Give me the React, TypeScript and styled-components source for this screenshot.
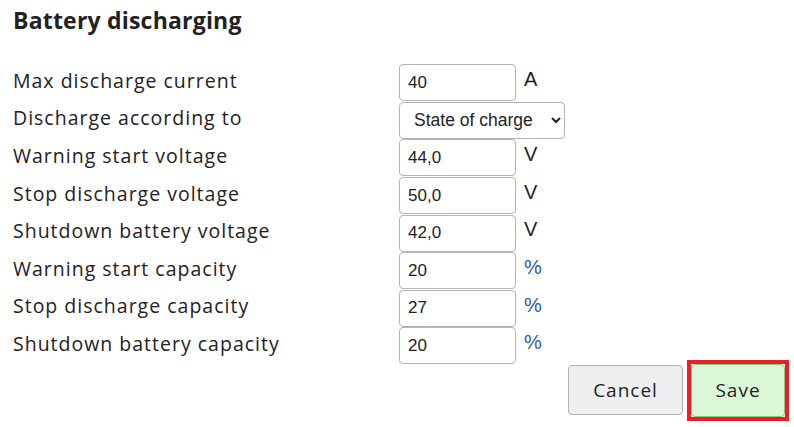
import React from 'react';
import styled, { createGlobalStyle } from 'styled-components';

const GlobalStyle = createGlobalStyle`
  html, body {
    margin: 0;
    padding: 0;
    background: #fff;
  }
  body {
    font-family: "Open Sans", "Noto Sans", sans-serif;
    color: #222;
  }
`;

type Row = {
  label: string;
  value: string;
  unit?: string;
  select?: boolean;
  unitBlue?: boolean;
};

const rows: Row[] = [
  { label: 'Max discharge current', value: '40', unit: 'A' },
  { label: 'Discharge according to', value: 'State of charge', select: true },
  { label: 'Warning start voltage', value: '44,0', unit: 'V' },
  { label: 'Stop discharge voltage', value: '50,0', unit: 'V' },
  { label: 'Shutdown battery voltage', value: '42,0', unit: 'V' },
  { label: 'Warning start capacity', value: '20', unit: '%', unitBlue: true },
  { label: 'Stop discharge capacity', value: '27', unit: '%', unitBlue: true },
  { label: 'Shutdown battery capacity', value: '20', unit: '%', unitBlue: true },
];

export default function App() {
  return (
    <Page>
      <GlobalStyle />
      <Title>Battery discharging</Title>
      <Form>
        {rows.map((row) => (
          <FieldRow key={row.label}>
            <Label>{row.label}</Label>
            {row.select ? (
              <Select defaultValue={row.value}>
                <option>State of charge</option>
                <option>Voltage</option>
              </Select>
            ) : (
              <Input defaultValue={row.value} />
            )}
            {row.unit && <Unit $blue={row.unitBlue}>{row.unit}</Unit>}
          </FieldRow>
        ))}
      </Form>
      <Actions>
        <Button>Cancel</Button>
        <SaveFrame>
          <Button $primary>Save</Button>
        </SaveFrame>
      </Actions>
    </Page>
  );
}

const Page = styled.div`
  width: 794px;
  padding: 4px 0 0 13px;
  box-sizing: border-box;
`;

const Title = styled.h2`
  margin: 0 0 28px;
  font-size: 23px;
  font-weight: 700;
  line-height: 32px;
  color: #222;
  letter-spacing: 0.2px;
`;

const Form = styled.div`
  display: flex;
  flex-direction: column;
`;

const FieldRow = styled.div`
  display: grid;
  grid-template-columns: 386px auto auto;
  align-items: center;
  justify-content: start;
  height: 37.6px;
`;

const Label = styled.span`
  font-size: 19.5px;
  letter-spacing: 1px;
  color: #222;
  padding-bottom: 5px;
`;

const Input = styled.input`
  box-sizing: border-box;
  width: 117px;
  height: 37px;
  padding: 0 8px;
  border: 1px solid #b5b5b5;
  border-radius: 4px;
  font-family: "Liberation Sans", Arial, sans-serif;
  font-size: 17px;
  color: #222;
  background: #fff;
  outline: none;
`;

const Select = styled.select`
  box-sizing: border-box;
  width: 166px;
  height: 37px;
  padding: 0 4px 0 10px;
  border: 1px solid #b5b5b5;
  border-radius: 4px;
  font-family: "Liberation Sans", Arial, sans-serif;
  font-size: 17.5px;
  color: #222;
  background: #fff;
  outline: none;
`;

const Unit = styled.span<{ $blue?: boolean }>`
  margin-left: 8px;
  font-family: "Liberation Sans", Arial, sans-serif;
  font-size: 20px;
  color: ${(p) => (p.$blue ? '#2b5c9c' : '#222')};
  align-self: start;
  padding-top: 4px;
`;

const Actions = styled.div`
  display: flex;
  justify-content: flex-end;
  align-items: center;
  gap: 4px;
  padding-right: 5px;
  margin-top: -5px;
`;

const SaveFrame = styled.div`
  border: 4px solid #e8202a;
  display: flex;
`;

const Button = styled.button<{ $primary?: boolean }>`
  box-sizing: border-box;
  width: ${(p) => (p.$primary ? '94px' : '115px')};
  height: ${(p) => (p.$primary ? '53px' : '50px')};
  border: 1px solid ${(p) => (p.$primary ? '#86c982' : '#b3b3b3')};
  border-radius: 4px;
  background: ${(p) => (p.$primary ? '#dcf7d8' : '#eeeff1')};
  font-family: "Open Sans", "Noto Sans", sans-serif;
  font-size: 19px;
  letter-spacing: 1px;
  color: #222;
  cursor: pointer;
`;
